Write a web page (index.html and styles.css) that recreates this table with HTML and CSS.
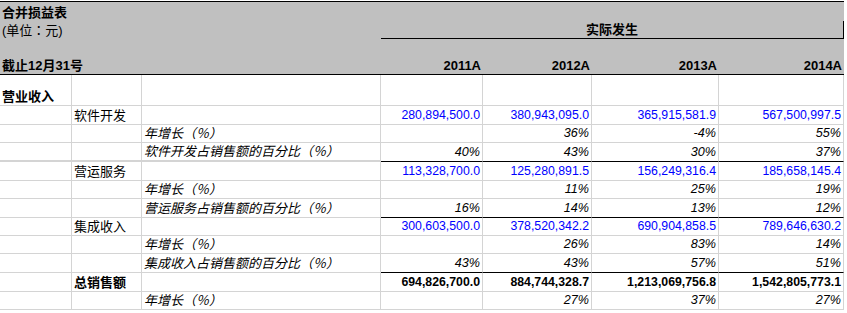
FILE: index.html
```html
<!DOCTYPE html>
<html lang="zh-CN">
<head>
    <meta charset="UTF-8">
    <title>合并损益表</title>
    <link rel="stylesheet" href="styles.css">
</head>
<body>
    <table class="sheet">
        <colgroup>
            <col style="width: 72px">
            <col style="width: 70px">
            <col style="width: 239px">
            <col style="width: 102px">
            <col style="width: 109px">
            <col style="width: 127px">
            <col style="width: 125px">
        </colgroup>
        <thead>
            <tr class="h1">
                <th class="label bold" colspan="3">合并损益表</th>
                <th colspan="4"></th>
            </tr>
            <tr class="h2">
                <th class="label unit" colspan="3" lang="zh-TW">(单位：元)</th>
                <th class="period" colspan="4">实际发生</th>
            </tr>
            <tr class="h3">
                <th colspan="7"></th>
            </tr>
            <tr class="h4">
                <th class="label bold" colspan="3">截止12月31号</th>
                <th class="year">2011A</th>
                <th class="year">2012A</th>
                <th class="year">2013A</th>
                <th class="year">2014A</th>
            </tr>
        </thead>
        <tbody>
            <tr class="first">
                <td class="label bold">营业收入</td>
                <td></td><td></td><td></td><td></td><td></td><td></td>
            </tr>

            <!-- 软件开发 -->
            <tr class="r19">
                <td></td>
                <td class="label">软件开发</td>
                <td></td>
                <td class="num">280,894,500.0</td>
                <td class="num">380,943,095.0</td>
                <td class="num">365,915,581.9</td>
                <td class="num">567,500,997.5</td>
            </tr>
            <tr class="r18">
                <td></td><td></td>
                <td class="label it">年增长（％）</td>
                <td></td>
                <td class="pct">36%</td>
                <td class="pct">-4%</td>
                <td class="pct">55%</td>
            </tr>
            <tr class="r19 split thick">
                <td></td><td></td>
                <td class="label it">软件开发占销售额的百分比（％）</td>
                <td class="pct">40%</td>
                <td class="pct">43%</td>
                <td class="pct">30%</td>
                <td class="pct">37%</td>
            </tr>

            <!-- 营运服务 -->
            <tr class="r19">
                <td></td>
                <td class="label">营运服务</td>
                <td></td>
                <td class="num">113,328,700.0</td>
                <td class="num">125,280,891.5</td>
                <td class="num">156,249,316.4</td>
                <td class="num">185,658,145.4</td>
            </tr>
            <tr class="r18">
                <td></td><td></td>
                <td class="label it">年增长（％）</td>
                <td></td>
                <td class="pct">11%</td>
                <td class="pct">25%</td>
                <td class="pct">19%</td>
            </tr>
            <tr class="r19 split">
                <td></td><td></td>
                <td class="label it">营运服务占销售额的百分比（％）</td>
                <td class="pct">16%</td>
                <td class="pct">14%</td>
                <td class="pct">13%</td>
                <td class="pct">12%</td>
            </tr>

            <!-- 集成收入 -->
            <tr class="r18">
                <td></td>
                <td class="label">集成收入</td>
                <td></td>
                <td class="num">300,603,500.0</td>
                <td class="num">378,520,342.2</td>
                <td class="num">690,904,858.5</td>
                <td class="num">789,646,630.2</td>
            </tr>
            <tr class="r18">
                <td></td><td></td>
                <td class="label it">年增长（％）</td>
                <td></td>
                <td class="pct">26%</td>
                <td class="pct">83%</td>
                <td class="pct">14%</td>
            </tr>
            <tr class="r19 split">
                <td></td><td></td>
                <td class="label it">集成收入占销售额的百分比（％）</td>
                <td class="pct">43%</td>
                <td class="pct">43%</td>
                <td class="pct">57%</td>
                <td class="pct">51%</td>
            </tr>

            <!-- 总销售额 -->
            <tr class="r19">
                <td></td>
                <td class="label bold">总销售额</td>
                <td></td>
                <td class="num bold total">694,826,700.0</td>
                <td class="num bold total">884,744,328.7</td>
                <td class="num bold total">1,213,069,756.8</td>
                <td class="num bold total">1,542,805,773.1</td>
            </tr>
            <tr class="r18">
                <td></td><td></td>
                <td class="label it">年增长（％）</td>
                <td></td>
                <td class="pct">27%</td>
                <td class="pct">37%</td>
                <td class="pct">27%</td>
            </tr>
        </tbody>
    </table>
</body>
</html>
```

FILE: styles.css
```css
* {
    margin: 0;
    padding: 0;
    box-sizing: border-box;
}

body {
    background: #fff;
    padding-top: 1px;
    font-family: 'Liberation Sans', 'Noto Sans CJK SC', sans-serif;
    color: #000;
}

.sheet {
    width: 844px;
    table-layout: fixed;
    border-collapse: separate;
    border-spacing: 0;
    border-top: 1px solid #000;
}

.sheet th,
.sheet td {
    padding: 0 2px 1px;
    vertical-align: bottom;
    white-space: nowrap;
    overflow: hidden;
    line-height: 15px;
    font-size: 12px;
    font-weight: normal;
}

/* 表头灰色区域 */
.sheet thead th {
    background: #c0c0c0;
    text-align: left;
}

.h1 { height: 19px; }
.h2 { height: 18px; }
.h3 { height: 18px; }
.h4 { height: 18px; }

.h4 th {
    border-bottom: 1px solid #000;
}

.sheet thead .unit {
    font-family: 'Liberation Sans', 'Noto Sans CJK TC', sans-serif;
}

.sheet thead .period {
    text-align: center;
    font-weight: bold;
    font-size: 13px;
    border-bottom: 1px solid #000;
    border-right: 1px solid #000;
}

.sheet thead .year {
    text-align: right;
    font-weight: bold;
    font-size: 13px;
}

/* 表体网格 */
.sheet tbody td {
    border-right: 1px solid #d4d4d4;
    border-bottom: 1px solid #d4d4d4;
}

.first { height: 31px; }
.r18 { height: 18px; }
.r19 { height: 19px; }

.sheet .label {
    font-size: 13px;
}

.sheet .bold {
    font-weight: bold;
}

.it {
    font-style: italic;
}

.sheet .num,
.sheet .pct {
    text-align: right;
    font-size: 12.3px;
}

.num {
    color: #0000ff;
}

.num.total {
    color: #000;
}

.sheet .pct {
    font-style: italic;
    font-size: 12.6px;
}

/* 分组之间的黑色分隔线 */
.sheet tbody .split td:nth-child(n+4) {
    border-bottom-color: #000;
}

.sheet tbody .thick td:nth-child(-n+3) {
    border-bottom: 2px solid #d4d4d4;
}
```
